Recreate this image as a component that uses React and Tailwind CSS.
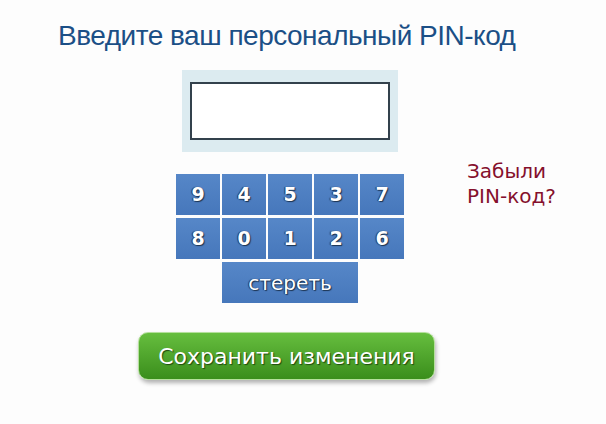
export default function App() {
    const row1 = ["9", "4", "5", "3", "7"];
    const row2 = ["8", "0", "1", "2", "6"];
    const keyCls =
        "h-[41px] flex items-center justify-center bg-gradient-to-b from-[#5687c8] to-[#4677bb] text-white font-['DejaVu_Sans'] font-bold text-[19px] [text-shadow:1px_1px_1px_#1c3350,-1px_0_1px_#1c3350]";

    return (
        <div className="w-[606px] h-[424px] bg-[#fdfdfd] overflow-hidden font-['Liberation_Sans',sans-serif]">
            <div className="flex flex-col">
                <h1 className="ml-[58px] mt-[19px] text-[28px] tracking-[-0.5px] leading-[34px] text-[#1b4f86]">
                    Введите ваш персональный PIN-код
                </h1>

                <div className="ml-[182px] mt-[17px] w-[216px] h-[82px] bg-[#dcebf0] flex items-center justify-center">
                    <div className="w-[200px] h-[58px] bg-white border-2 border-[#33414c]"></div>
                </div>

                <div className="mt-[22px] flex items-start">
                    <div className="ml-[176px] w-[228px] grid grid-cols-5 gap-x-[2px] gap-y-[3px]">
                        {row1.map((d) => (
                            <div key={"a" + d} className={keyCls}>{d}</div>
                        ))}
                        {row2.map((d) => (
                            <div key={"b" + d} className={keyCls}>{d}</div>
                        ))}
                        <div className="col-start-2 col-span-3 h-[41px] flex items-center justify-center bg-gradient-to-b from-[#5687c8] to-[#4677bb] text-white font-['DejaVu_Sans'] text-[20px] [text-shadow:1px_1px_1px_#1c3350,-1px_0_1px_#1c3350]">
                            стереть
                        </div>
                    </div>
                    <div className="ml-[63px] -mt-[15px] text-[20px] leading-[25px] text-[#85102c] font-['DejaVu_Sans']">
                        Забыли
                        <br />
                        PIN-код?
                    </div>
                </div>

                <div className="ml-[138px] mt-[29px] w-[297px] h-[48px] rounded-[10px] border border-[#b5e09c] bg-gradient-to-b from-[#66be3e] to-[#3a8e1b] shadow-[1px_3px_4px_rgba(0,0,0,0.3)] flex items-center justify-center text-white font-['DejaVu_Sans'] text-[22px] [text-shadow:1px_1px_1px_#1e4a0e]">
                    Сохранить изменения
                </div>
            </div>
        </div>
    );
}
